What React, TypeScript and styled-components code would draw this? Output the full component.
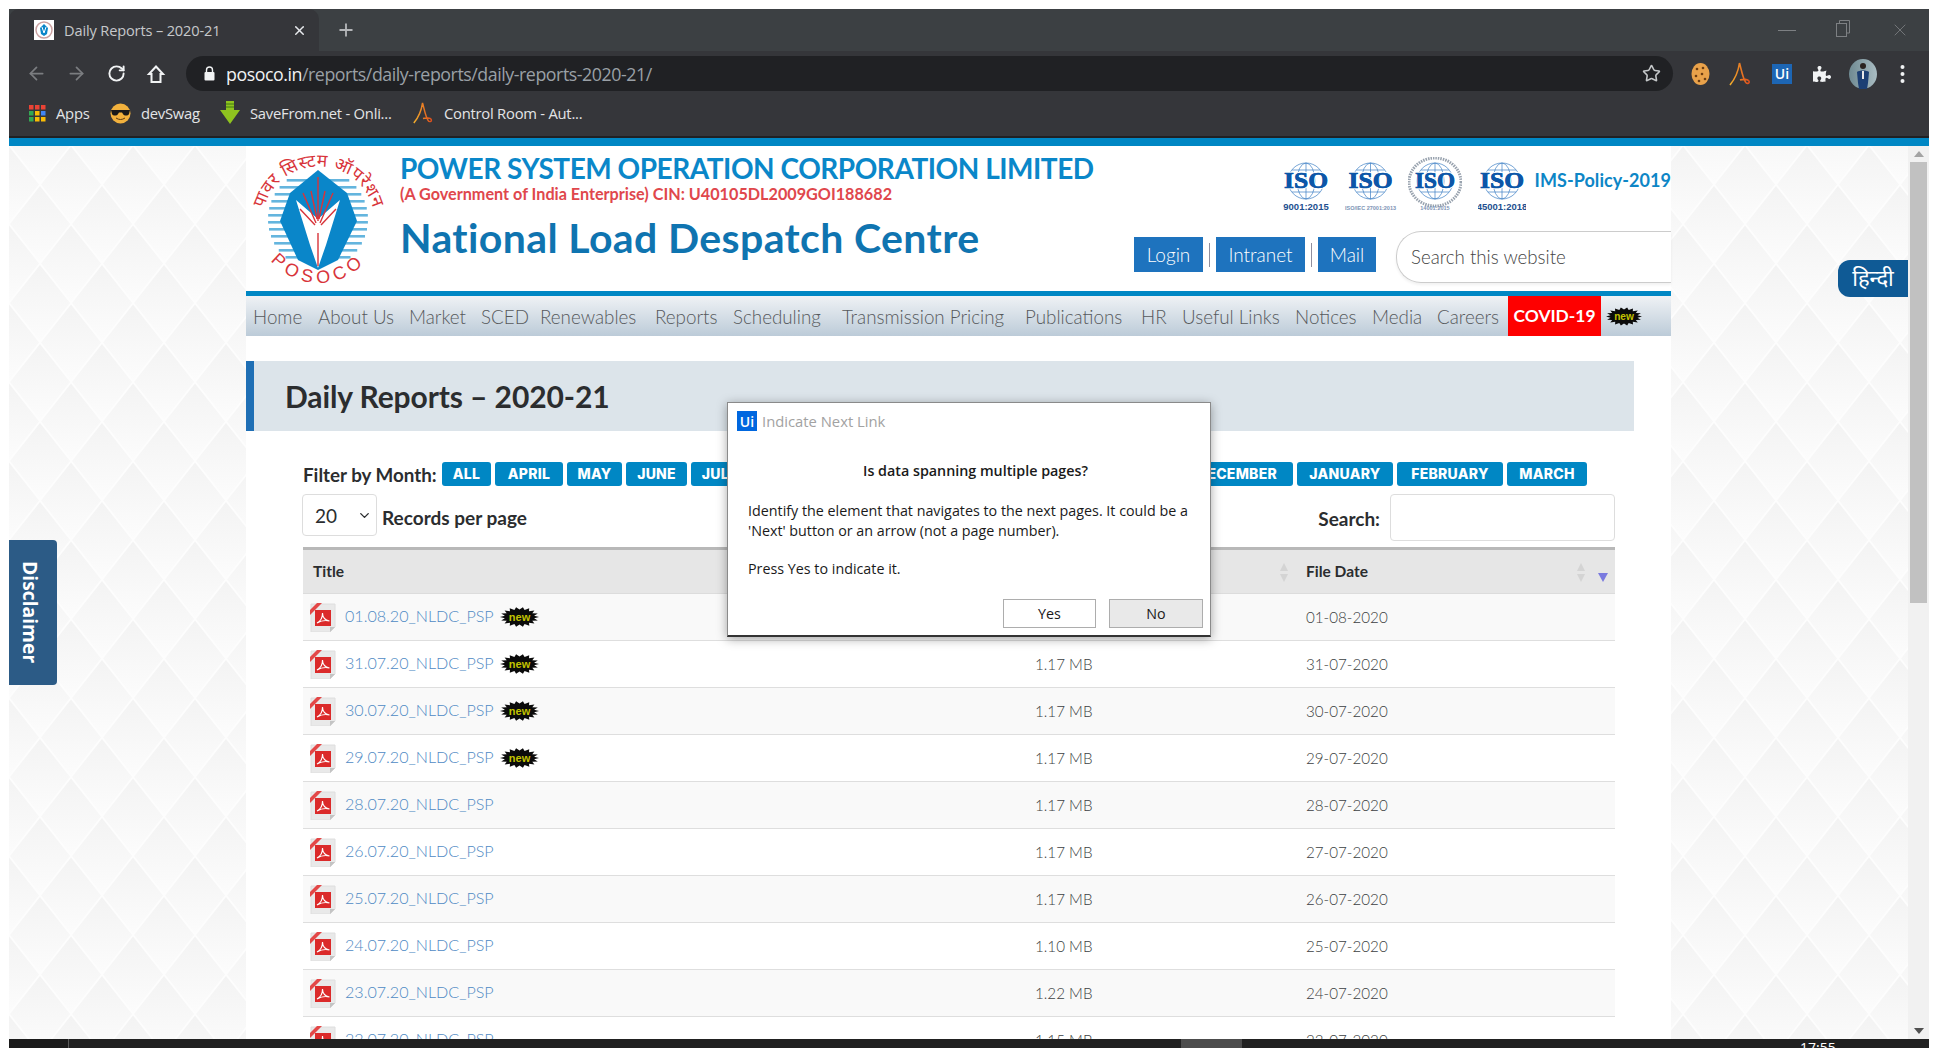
import { ReactNode } from 'react';
import styled, { createGlobalStyle } from 'styled-components';
import { ArrowLeft, ArrowRight, ChevronDown, Plus, RotateCw, Star, X } from 'lucide-react';
import { FaPuzzlePiece } from 'react-icons/fa';

const PAGE_FONT = '"Lato", "Noto Sans", sans-serif';
const UI_FONT = '"Open Sans", "Noto Sans", sans-serif';

const diamondTile = `<svg xmlns="http://www.w3.org/2000/svg" width="62" height="79" viewBox="0 0 62 79"><defs><linearGradient id="g" x1="0" y1="0" x2="0" y2="1"><stop offset="0" stop-color="#f3f3f3"/><stop offset="1" stop-color="#fcfcfc"/></linearGradient></defs><rect width="62" height="79" fill="#fdfdfd"/><g fill="url(#g)"><path d="M31 -38 L61 0 L31 38 L1 0Z"/><path d="M31 41 L61 79 L31 117 L1 79Z"/><path d="M0 1.5 L30 39.5 L0 77.5 L-30 39.5Z"/><path d="M62 1.5 L92 39.5 L62 77.5 L32 39.5Z"/></g></svg>`;

const GlobalStyle = createGlobalStyle`
  html, body {
    margin: 0;
    padding: 0;
    background: #fff;
    overflow: hidden;
  }
  * {
    box-sizing: border-box;
  }
`;

const SWindow = styled.div`
  position: relative;
  display: flex;
  flex-direction: column;
  width: 1938px;
  height: 1048px;
  padding: 9px 9px 0;
  background: #fff;
  overflow: hidden;
`;

/* browser chrome */
const STabStrip = styled.div`
  display: flex;
  align-items: flex-end;
  flex: none;
  height: 42px;
  background: #3c4043;
`;

const STab = styled.div`
  display: flex;
  align-items: center;
  width: 310px;
  height: 42px;
  padding: 0 12px 0 25px;
  border-radius: 10px 10px 0 0;
  background: #35363a;
  color: #c6c8cb;
  font: 400 14.6px ${UI_FONT};
  letter-spacing: -0.15px;
`;

const SFavicon = styled.span`
  display: flex;
  align-items: center;
  justify-content: center;
  width: 20px;
  height: 20px;
  margin-right: 10px;
  background: #fff;
`;

const STabTitle = styled.span`
  flex: 1;
`;

const SNewTab = styled.span`
  display: flex;
  align-self: center;
  margin-left: 17px;
  color: #b4b6b9;
`;

const SWindowControls = styled.div`
  display: flex;
  align-self: center;
  gap: 40px;
  margin-left: auto;
  padding-right: 19px;
  color: #7d8083;
`;

const SMinimize = styled.span`
  align-self: center;
  width: 18px;
  height: 1px;
  background: #7d8083;
`;

const SToolbar = styled.div`
  display: flex;
  align-items: center;
  flex: none;
  height: 45px;
  padding: 0 0 0 16px;
  background: #35363a;
`;

const SNavIcon = styled.span<{ $off?: boolean }>`
  display: flex;
  justify-content: center;
  width: 22px;
  margin-right: 18px;
  color: ${({ $off }) => ($off ? '#7b7d80' : '#f1f3f4')};
`;

const SOmnibox = styled.div`
  display: flex;
  align-items: center;
  width: 1487px;
  height: 35px;
  margin-left: 1px;
  padding: 0 12px 0 18px;
  border-radius: 18px;
  background: #202124;
  font: 400 17.8px ${UI_FONT};
  letter-spacing: -0.45px;
  color: #9aa0a6;
`;

const SUrlHost = styled.span`
  margin-left: 11px;
  color: #f1f3f4;
`;

const SOmniStar = styled.span`
  display: flex;
  margin-left: auto;
  color: #c4c7c9;
`;

const SExtensions = styled.div`
  display: flex;
  align-items: center;
  width: 246px;
  padding-left: 17px;
`;

const SExtSlot = styled.span<{ $w: number }>`
  display: flex;
  justify-content: center;
  flex: none;
  width: ${({ $w }) => $w}px;
  color: #f1f3f4;
`;

const SUiBadge = styled.span<{ $size: number; $fs: number; $bg: string }>`
  display: inline-flex;
  align-items: center;
  justify-content: center;
  flex: none;
  width: ${({ $size }) => $size}px;
  height: ${({ $size }) => $size}px;
  background: ${({ $bg }) => $bg};
  color: #fff;
  font: 600 ${({ $fs }) => $fs}px ${UI_FONT};
`;

const SBookmarks = styled.div`
  display: flex;
  align-items: center;
  flex: none;
  height: 42px;
  padding: 0 0 6px 20px;
  border-bottom: 2px solid #202124;
  background: #35363a;
  color: #e3e4e6;
  font: 400 14.8px ${UI_FONT};
  letter-spacing: -0.25px;
`;

const SBookmark = styled.span<{ $w: number }>`
  display: flex;
  align-items: center;
  gap: 10px;
  width: ${({ $w }) => $w}px;
`;

/* page */
const SViewport = styled.div`
  display: flex;
  flex: 1;
  min-height: 0;
  border-top: 8px solid #0087c4;
  overflow: hidden;
`;

const SPage = styled.div`
  position: relative;
  flex: 1;
  min-width: 0;
  padding-left: 237px;
  background: #fff url("data:image/svg+xml,${encodeURIComponent(diamondTile)}") 0 -1px repeat;
  overflow: hidden;
`;

const SContent = styled.div`
  width: 1425px;
  height: 100%;
  background: #fff;
  font-family: ${PAGE_FONT};
`;

const SHeader = styled.header`
  display: flex;
  height: 150px;
  padding: 7px 0 0 7px;
  border-bottom: 5px solid #0087c4;
`;

const SHeadTitles = styled.div`
  width: 734px;
  margin-left: 15px;
`;

const SCompany = styled.div`
  color: #0a87c9;
  font-size: 28px;
  font-weight: 700;
  letter-spacing: -0.47px;
  line-height: 31px;
  white-space: nowrap;
`;

const SCin = styled.div`
  color: #e0474c;
  font-size: 16.2px;
  font-weight: 700;
  line-height: 19px;
  white-space: nowrap;
`;

const SCentre = styled.div`
  margin-top: 12px;
  color: #0f74b0;
  font-size: 41px;
  font-weight: 700;
  letter-spacing: 0.38px;
  line-height: 46px;
  white-space: nowrap;
`;

const SHeadRight = styled.div`
  display: flex;
  flex-direction: column;
  flex: 1;
  margin-top: 4px;
`;

const SIsoRow = styled.div`
  display: flex;
  align-items: center;
  justify-content: flex-end;
  height: 55px;
`;

const SIsoSlot = styled.span<{ $gap: number }>`
  display: flex;
  margin-right: ${({ $gap }) => $gap}px;
`;

const SIsoPolicy = styled.span`
  margin-bottom: 9px;
  color: #0d86c6;
  font-size: 18px;
  font-weight: 700;
  letter-spacing: 0.05px;
  line-height: 46px;
  white-space: nowrap;
`;

const SActionRow = styled.div`
  display: flex;
  align-items: flex-start;
  margin-top: 19px;
`;

const SActionButton = styled.a<{ $w: number }>`
  display: block;
  width: ${({ $w }) => $w}px;
  height: 35px;
  margin-top: 6px;
  background: #1e73be;
  color: #fff;
  font-size: 19px;
  font-weight: 300;
  line-height: 36px;
  text-align: center;
`;

const SActionSep = styled.span`
  width: 1px;
  height: 24px;
  margin: 12px 6px 0;
  background: #8f8f9f;
`;

const SSiteSearch = styled.div`
  flex: 1;
  height: 52px;
  margin-left: 20px;
  padding-left: 14px;
  border: 1px solid #ccc;
  border-right: 0;
  border-radius: 25px 0 0 25px;
  box-shadow: 0 2px 3px rgba(0, 0, 0, 0.06);
  color: #444;
  font-size: 18.7px;
  font-weight: 300;
  line-height: 50px;
`;

const SNav = styled.nav`
  display: flex;
  align-items: center;
  height: 40px;
  padding-left: 7px;
  background: linear-gradient(#eff2f5, #bccbd8);
  color: #56595c;
  font-size: 18.8px;
  font-weight: 300;
`;

const SNavItem = styled.a<{ $x: number }>`
  flex: none;
  width: ${({ $x }) => $x}px;
  white-space: nowrap;
`;

const SCovid = styled.a`
  align-self: stretch;
  width: 93px;
  background: #fe0000;
  color: #fff;
  font-size: 17.4px;
  font-weight: 700;
  line-height: 40px;
  text-align: center;
`;

const SNavBadge = styled.span`
  display: flex;
  margin-left: 5px;
`;

const STitleBand = styled.div`
  display: flex;
  align-items: center;
  width: 1388px;
  height: 70px;
  margin-top: 25px;
  padding-left: 31px;
  border-left: 8px solid #1f6fb5;
  background: #dce4ea;
  color: #2b2d2f;
  font-size: 30px;
  font-weight: 700;
  letter-spacing: -0.1px;
`;

const SBody = styled.div`
  width: 1312px;
  margin-left: 57px;
  color: #2b2d2f;
`;

const SFilterRow = styled.div`
  display: flex;
  align-items: center;
  gap: 4px;
  height: 24px;
  margin-top: 31px;
  font-size: 18.8px;
  font-weight: 700;
`;

const SFilterLabel = styled.span`
  width: 135px;
  white-space: nowrap;
`;

const SMonthButton = styled.span<{ $w: number }>`
  flex: none;
  width: ${({ $w }) => $w}px;
  height: 24px;
  border-radius: 3px;
  background: #0087c4;
  color: #fff;
  font: 800 14px/24px "Inter", sans-serif;
  letter-spacing: 0.25px;
  text-align: center;
  white-space: nowrap;
`;

const SToolsRow = styled.div`
  display: flex;
  align-items: flex-start;
  margin-top: 8px;
  height: 53px;
`;

const SPageSize = styled.div`
  display: flex;
  align-items: center;
  justify-content: space-between;
  width: 75px;
  height: 42px;
  margin-left: -1px;
  padding: 0 4px 0 12px;
  border: 1px solid #ddd;
  border-radius: 4px;
  font-size: 19px;
`;

const SRecordsLabel = styled.span`
  margin-left: 5px;
  font-size: 19px;
  font-weight: 700;
  line-height: 47px;
`;

const STableSearch = styled.div`
  display: flex;
  margin-left: auto;
  font-size: 19px;
  font-weight: 700;
  line-height: 50px;
`;

const SSearchInput = styled.span`
  width: 225px;
  height: 47px;
  margin-left: 10px;
  border: 1px solid #ddd;
  border-radius: 4px;
`;

const STable = styled.table`
  width: 1312px;
  border-collapse: collapse;
  table-layout: fixed;
  border-top: 3px solid #b8b8b8;
`;

const SHeadCell = styled.th<{ $w: number }>`
  position: relative;
  width: ${({ $w }) => $w}px;
  height: 45px;
  padding: 0 10px 2px;
  background: #e6e6e6;
  font-size: 15.5px;
  font-weight: 700;
  text-align: left;
  border-bottom: 1px solid #dcdcdc;
`;

const SSortMark = styled.span<{ $right: number }>`
  position: absolute;
  top: 13px;
  right: ${({ $right }) => $right}px;
  display: flex;
`;

const SRow = styled.tr<{ $odd: boolean }>`
  height: 47px;
  background: ${({ $odd }) => ($odd ? '#f9f9f9' : '#fff')};
  border-bottom: 1.5px solid #dedede;
`;

const SCell = styled.td`
  padding: 0 10px;
  color: #3c3f42;
  font-size: 15.2px;
  font-weight: 300;
`;

const STitleCell = styled.div`
  display: flex;
  align-items: center;
  margin-left: -3px;
`;

const SFileLink = styled.a`
  margin: 0 5px 3px 9px;
  color: #4f8ac4;
  font-size: 16.1px;
  font-weight: 300;
`;

const SHindi = styled.a`
  position: absolute;
  top: 114px;
  right: 0;
  width: 70px;
  height: 37px;
  border-radius: 12px 0 0 12px;
  background: #0f5a95;
  color: #fff;
  font: 400 22px/34px "Noto Sans", "Noto Sans Devanagari", sans-serif;
  text-align: center;
`;

const SDisclaimer = styled.a`
  position: absolute;
  top: 394px;
  left: 0;
  width: 48px;
  height: 145px;
  padding: 21px 6px 0 0;
  border-radius: 0 4px 4px 0;
  background: #2c5b86;
  color: #fff;
  font: 700 19.3px/42px ${UI_FONT};
  writing-mode: vertical-rl;
`;

const SScrollbar = styled.div`
  display: flex;
  flex-direction: column;
  align-items: center;
  flex: none;
  width: 21px;
  padding-top: 5px;
  background: #f1f1f1;
`;

const SScrollThumb = styled.div`
  width: 17px;
  height: 441px;
  margin-top: 5px;
  background: #c1c1c1;
`;

const SScrollArrow = styled.span<{ $up?: boolean }>`
  width: 0;
  height: 0;
  border-left: 5px solid transparent;
  border-right: 5px solid transparent;
  ${({ $up }) => ($up ? 'border-bottom: 6px solid #a3a3a3;' : 'border-top: 6px solid #505050; margin-top: auto; margin-bottom: 5px;')}
`;

const STaskbar = styled.div`
  display: flex;
  flex: none;
  height: 9px;
  background: #212121;
  overflow: hidden;
`;

const STaskStart = styled.span`
  width: 60px;
  border-right: 1px solid #5a5a5a;
  background: #1b1b1b;
`;

const STaskTile = styled.span`
  width: 61px;
  margin-left: 1112px;
  background: #4c4c4c;
`;

const STaskClock = styled.span`
  margin: 0 0 0 558px;
  color: #fff;
  font: 400 14px/18px ${UI_FONT};
`;

/* dialog */
const SDialog = styled.div`
  position: absolute;
  top: 402px;
  left: 727px;
  display: flex;
  flex-direction: column;
  width: 484px;
  height: 235px;
  border: 1px solid #8a8a8a;
  border-bottom: 2px solid #333;
  background: #fff;
  box-shadow: 0 2px 10px rgba(0, 0, 0, 0.35);
  color: #1a1a1a;
  font: 400 14.3px ${UI_FONT};
`;

const SDialogBar = styled.div`
  display: flex;
  align-items: center;
  gap: 5px;
  height: 20px;
  margin: 8px 0 0 9px;
  color: #a2a2a2;
  font-size: 14.8px;
`;

const SDialogHeading = styled.div`
  margin-top: 30px;
  padding-left: 13px;
  font-weight: 600;
  line-height: 20px;
  text-align: center;
`;

const SDialogText = styled.p<{ $gap: number }>`
  margin: ${({ $gap }) => $gap}px 0 0 20px;
  line-height: 20px;
  white-space: nowrap;
`;

const SDialogActions = styled.div`
  display: flex;
  justify-content: flex-end;
  gap: 13px;
  margin-top: auto;
  padding: 0 7px 7px 0;
`;

const SDialogButton = styled.span<{ $muted?: boolean }>`
  width: ${({ $muted }) => ($muted ? 94 : 93)}px;
  height: 29px;
  border: 1px solid #adadad;
  background: ${({ $muted }) => ($muted ? '#e9e9e9' : '#fff')};
  line-height: 27px;
  text-align: center;
`;

const burst = (w: number, h: number, n: number) => {
  const pts: string[] = [];
  for (let i = 0; i < n * 2; i += 1) {
    const a = (Math.PI * i) / n;
    const k = i % 2 === 0 ? 1 : 0.76;
    pts.push(`${(w / 2 + (Math.cos(a) * k * w) / 2).toFixed(1)},${(h / 2 + (Math.sin(a) * k * h) / 2).toFixed(1)}`);
  }
  return pts.join(' ');
};

const NewBadge = ({ w = 41, h = 20 }: { w?: number; h?: number }) => (
  <svg width={w} height={h} viewBox="0 0 39 20">
    <polygon points={burst(39, 20, 18)} fill="#0b0b0b" />
    <text x="19.5" y="14" textAnchor="middle" fontFamily="Liberation Sans" fontSize="11" fontWeight="700" fill="#c2c200">new</text>
  </svg>
);

const PdfIcon = () => (
  <svg width="26" height="29" viewBox="0 0 26 29">
    <path d="M1 1h24v23l-5 5H1z" fill="#e9e9e9" stroke="#dedede" />
    <path d="M25 24l-5 0v5z" fill="#c4c4c4" />
    <rect x="5" y="7" width="16" height="16" fill="#db2a2a" />
    <path d="M7 20c4-2 5.5-6 5.5-10 0 4 2.5 7 7 8-4-1-9 0-12.5 2z" fill="none" stroke="#fff" strokeWidth="1.1" />
    <path d="M0 7L7 0h5L0 12z" fill="#e34747" />
  </svg>
);

const SortMark = () => (
  <svg width="10" height="19" viewBox="0 0 10 19">
    <path d="M5 0l4 8H1z" fill="#d4d4d4" />
    <path d="M5 19l4-8H1z" fill="#d4d4d4" />
  </svg>
);

const IsoLogo = ({ w, cap, ring, faint }: { w: number; cap: string; ring?: boolean; faint?: boolean }) => {
  const cx = w / 2;
  return (
    <svg width={w} height="55" viewBox={`0 0 ${w} 55`}>
      {ring && <ellipse cx={cx} cy="25" rx={w / 2 - 1} ry="24" fill="none" stroke="#98a2ae" strokeWidth="3" strokeDasharray="1.5 1" />}
      <g fill="none" stroke="#3d7fc4" strokeWidth="0.7">
        <circle cx={cx} cy="24" r="18" />
        <ellipse cx={cx} cy="24" rx="9" ry="18" />
        <path d={`M${cx} 6v36M${cx - 14} 13h28M${cx - 14} 35h28`} />
      </g>
      <text x={cx} y="31" textAnchor="middle" fontFamily="Liberation Serif" fontSize="24" fontWeight="700" fill="#0c56a8" stroke="#fff" strokeWidth="2.5" paintOrder="stroke" textLength={ring ? 40 : 44} lengthAdjust="spacingAndGlyphs">ISO</text>
      <text x={cx} y="31" textAnchor="middle" fontFamily="Liberation Serif" fontSize="24" fontWeight="700" fill="#0c56a8" stroke="#0c56a8" strokeWidth="0.7" textLength={ring ? 40 : 44} lengthAdjust="spacingAndGlyphs">ISO</text>
      <text x={cx} y="53" textAnchor="middle" fontFamily="Liberation Sans" fontSize={faint ? 5.5 : 9.5} fontWeight="700" fill={faint ? '#7d93b5' : '#23508f'}>{cap}</text>
    </svg>
  );
};

const Logo = () => (
  <svg width="132" height="135" viewBox="0 0 132 135">
    <defs>
      <path id="hindiArc" d="M9 70 A56.5 56.5 0 0 1 122 70" />
      <path id="posocoArc" d="M3.5 68 A62 62 0 0 0 127.5 68" />
    </defs>
    <text fontFamily="Noto Sans, Noto Sans Devanagari, sans-serif" fontSize="17.5" fill="#d8343a" letterSpacing="0.6">
      <textPath href="#hindiArc" startOffset="50%" textAnchor="middle">पावर सिस्टम ऑपरेशन</textPath>
    </text>
    {[26, 33, 40, 47, 54, 61, 68, 75, 82, 89, 96, 103].map((y) => {
      const half = Math.sqrt(Math.max(0, 2500 - (y - 65) ** 2));
      return <rect key={y} x={65 - half} y={y} width={2 * half} height="2.6" fill="#64b5de" />;
    })}
    <path d="M65 17L37 40 27 68 45 107 65 117 85 107 104 68 94 40z" fill="#0a86c9" />
    <path d="M43 47L65 66 87 47 73 92 65 115 57 92z" fill="#fff" />
    <g stroke="#d8343a" strokeWidth="1.4" fill="none">
      <path d="M65 24V68M65 80V113M50 40L63 70M80 40L67 70M58 38L64 66M72 38L66 66M47 56L62 72M83 56L68 72" />
    </g>
    <text fontFamily="Liberation Sans" fontSize="18" fill="#d8343a" letterSpacing="5">
      <textPath href="#posocoArc" startOffset="50%" textAnchor="middle">POSOCO</textPath>
    </text>
  </svg>
);

const Favicon = () => (
  <svg width="18" height="18" viewBox="0 0 18 18">
    <circle cx="9" cy="9" r="8" fill="none" stroke="#c9a0a0" strokeWidth="1.5" />
    <path d="M9 3L5 7l1 6 3 2 3-2 1-6z" fill="#0a86c9" />
    <path d="M7 6l2 6 2-6" stroke="#fff" fill="none" />
  </svg>
);

const HomeOutline = () => (
  <svg width="20" height="20" viewBox="0 0 20 20" fill="none" stroke="#f1f3f4" strokeWidth="2" strokeLinejoin="miter">
    <path d="M10 2.5L17 10h-2.5v8h-9v-8H3z" />
  </svg>
);

const AIcon = ({ id, size }: { id: string; size: number }) => (
  <svg width={size} height={size} viewBox="0 0 22 24" fill="none">
    <defs>
      <linearGradient id={id} x1="0" x2="1" y1="0" y2="0">
        <stop offset="0" stopColor="#f4b02c" />
        <stop offset="1" stopColor="#dd4f1d" />
      </linearGradient>
    </defs>
    <path d="M1 23C6 17 9.5 8 10.5 1c2 7 3 14 6 19 1 2 4.5 2 3.5-1-1-2-6-2-9-1" stroke={`url(#${id})`} strokeWidth="1.6" />
  </svg>
);

const AppsIcon = () => {
  const colors = ['#ea4335', '#ea4335', '#ea4335', '#34a853', '#fbbc04', '#4285f4', '#34a853', '#fbbc04', '#fbbc04'];
  return (
    <svg width="17" height="17" viewBox="0 0 17 17">
      {colors.map((c, i) => (
        <rect key={i} x={(i % 3) * 6} y={Math.floor(i / 3) * 6} width="4.5" height="4.5" fill={c} />
      ))}
    </svg>
  );
};

const Cool = () => (
  <svg width="21" height="21" viewBox="0 0 21 21">
    <circle cx="10.5" cy="10.5" r="10" fill="#f2b13d" />
    <path d="M1 7h19l-1 4c-1 2-5 2-6 0l-1-1.5h-3L8 11c-1 2-5 2-6 0z" fill="#1a1a1a" />
    <path d="M6 15c3 2 6 2 9 0" stroke="#5b3a10" fill="none" />
  </svg>
);

const SaveFrom = () => (
  <svg width="20" height="24" viewBox="0 0 20 24">
    <path d="M6 0h8v9h6L10 23 0 9h6z" fill="#8fc31f" />
    <path d="M6 3h8M6 6h8" stroke="#3e7a12" />
  </svg>
);

const Cookie = () => (
  <svg width="19" height="24" viewBox="0 0 19 24">
    <ellipse cx="9.5" cy="12" rx="9" ry="11" fill="#e9a24a" />
    {[[6, 7], [12, 6], [5, 14], [11, 12], [14, 17], [8, 19]].map(([x, y]) => (
      <circle key={`${x}-${y}`} cx={x} cy={y} r="1.3" fill="#6b3d12" />
    ))}
  </svg>
);

const Avatar = () => (
  <svg width="28" height="30" viewBox="0 0 28 30">
    <defs>
      <linearGradient id="av" x1="0" x2="1" y1="0" y2="0">
        <stop offset="0" stopColor="#6f8a92" />
        <stop offset="1" stopColor="#a9bcc2" />
      </linearGradient>
    </defs>
    <ellipse cx="14" cy="15" rx="14" ry="15" fill="url(#av)" />
    <circle cx="14" cy="7" r="3" fill="#2b2320" />
    <path d="M8 13c2-2 10-2 12 0l-1 11-1 6h-8l-1-6z" fill="#1c3f74" />
    <path d="M13 12h2v8h-2z" fill="#e8e8e8" />
  </svg>
);

const Lock = () => (
  <svg width="11" height="15" viewBox="0 0 11 15">
    <path d="M2.5 6V4a3 3 0 0 1 6 0v2" fill="none" stroke="#f1f3f4" strokeWidth="1.4" />
    <rect x="0.5" y="6" width="10" height="8.5" rx="1" fill="#f1f3f4" />
  </svg>
);

const Restore = () => (
  <svg width="14" height="18" viewBox="0 0 14 18" fill="none" stroke="#7d8083">
    <rect x="0.5" y="3.5" width="10" height="13" />
    <path d="M3.5 3V0.5h10V13H11" />
  </svg>
);

const MoreDots = () => (
  <svg width="5" height="20" viewBox="0 0 5 20" fill="#f1f3f4">
    <circle cx="2.5" cy="3" r="2" />
    <circle cx="2.5" cy="10" r="2" />
    <circle cx="2.5" cy="17" r="2" />
  </svg>
);

const NAV_ITEMS: [string, number][] = [
  ['Home', 65],
  ['About Us', 91],
  ['Market', 72],
  ['SCED', 59],
  ['Renewables', 115],
  ['Reports', 78],
  ['Scheduling', 109],
  ['Transmission Pricing', 183],
  ['Publications', 116],
  ['HR', 41],
  ['Useful Links', 113],
  ['Notices', 77],
  ['Media', 65],
  ['Careers', 71],
];

const MONTHS: [string, number][] = [
  ['ALL', 49],
  ['APRIL', 68],
  ['MAY', 55],
  ['JUNE', 61],
  ['JULY', 58],
  ['AUGUST', 86],
  ['SEPTEMBER', 122],
  ['OCTOBER', 94],
  ['NOVEMBER', 110],
  ['DECEMBER', 112],
  ['JANUARY', 96],
  ['FEBRUARY', 106],
  ['MARCH', 80],
];

const ROWS = [
  { name: '01.08.20_NLDC_PSP', size: '1.17 MB', date: '01-08-2020', fresh: true },
  { name: '31.07.20_NLDC_PSP', size: '1.17 MB', date: '31-07-2020', fresh: true },
  { name: '30.07.20_NLDC_PSP', size: '1.17 MB', date: '30-07-2020', fresh: true },
  { name: '29.07.20_NLDC_PSP', size: '1.17 MB', date: '29-07-2020', fresh: true },
  { name: '28.07.20_NLDC_PSP', size: '1.17 MB', date: '28-07-2020' },
  { name: '26.07.20_NLDC_PSP', size: '1.17 MB', date: '27-07-2020' },
  { name: '25.07.20_NLDC_PSP', size: '1.17 MB', date: '26-07-2020' },
  { name: '24.07.20_NLDC_PSP', size: '1.10 MB', date: '25-07-2020' },
  { name: '23.07.20_NLDC_PSP', size: '1.22 MB', date: '24-07-2020' },
  { name: '22.07.20_NLDC_PSP', size: '1.15 MB', date: '23-07-2020' },
];

const Bookmark = ({ w, icon, label }: { w: number; icon: ReactNode; label: string }) => (
  <SBookmark $w={w}>
    {icon}
    <span>{label}</span>
  </SBookmark>
);

const App = () => {
  return (
    <SWindow>
      <GlobalStyle />
      <STabStrip>
        <STab>
          <SFavicon><Favicon /></SFavicon>
          <STabTitle>Daily Reports – 2020-21</STabTitle>
          <X size={15} color="#e8eaed" strokeWidth={2.4} />
        </STab>
        <SNewTab><Plus size={20} strokeWidth={2.2} /></SNewTab>
        <SWindowControls>
          <SMinimize />
          <Restore />
          <X size={20} strokeWidth={1} />
        </SWindowControls>
      </STabStrip>
      <SToolbar>
        <SNavIcon $off><ArrowLeft size={21} /></SNavIcon>
        <SNavIcon $off><ArrowRight size={21} /></SNavIcon>
        <SNavIcon><RotateCw size={19} strokeWidth={2.4} /></SNavIcon>
        <SNavIcon><HomeOutline /></SNavIcon>
        <SOmnibox>
          <Lock />
          <SUrlHost>posoco.in</SUrlHost>
          <span>/reports/daily-reports/daily-reports-2020-21/</span>
          <SOmniStar><Star size={19} /></SOmniStar>
        </SOmnibox>
        <SExtensions>
          <SExtSlot $w={20}><Cookie /></SExtSlot>
          <SExtSlot $w={60}><AIcon id="aExt" size={24} /></SExtSlot>
          <SExtSlot $w={24}><SUiBadge $size={20} $fs={14} $bg="#1d66b4">Ui</SUiBadge></SExtSlot>
          <SExtSlot $w={55}><FaPuzzlePiece size={18} /></SExtSlot>
          <SExtSlot $w={28}><Avatar /></SExtSlot>
          <SExtSlot $w={50}><MoreDots /></SExtSlot>
        </SExtensions>
      </SToolbar>
      <SBookmarks>
        <Bookmark w={81} icon={<AppsIcon />} label="Apps" />
        <Bookmark w={110} icon={<Cool />} label="devSwag" />
        <Bookmark w={192} icon={<SaveFrom />} label="SaveFrom.net - Onli..." />
        <Bookmark w={200} icon={<AIcon id="aBookmark" size={22} />} label="Control Room - Aut..." />
      </SBookmarks>
      <SViewport>
        <SPage>
          <SContent>
            <SHeader>
              <Logo />
              <SHeadTitles>
                <SCompany>POWER SYSTEM OPERATION CORPORATION LIMITED</SCompany>
                <SCin>(A Government of India Enterprise) CIN: U40105DL2009GOI188682</SCin>
                <SCentre>National Load Despatch Centre</SCentre>
              </SHeadTitles>
              <SHeadRight>
                <SIsoRow>
                  <SIsoSlot $gap={15}><IsoLogo w={46} cap="9001:2015" /></SIsoSlot>
                  <SIsoSlot $gap={11}><IsoLogo w={53} cap="ISO/IEC 27001:2013" faint /></SIsoSlot>
                  <SIsoSlot $gap={16}><IsoLogo w={54} cap="14001:2015" ring faint /></SIsoSlot>
                  <SIsoSlot $gap={9}><IsoLogo w={48} cap="45001:2018" /></SIsoSlot>
                  <SIsoPolicy>IMS-Policy-2019</SIsoPolicy>
                </SIsoRow>
                <SActionRow>
                  <SActionButton $w={69}>Login</SActionButton>
                  <SActionSep />
                  <SActionButton $w={89}>Intranet</SActionButton>
                  <SActionSep />
                  <SActionButton $w={58}>Mail</SActionButton>
                  <SSiteSearch>Search this website</SSiteSearch>
                </SActionRow>
              </SHeadRight>
            </SHeader>
            <SNav>
              {NAV_ITEMS.map(([label, w]) => (
                <SNavItem key={label} $x={w}>{label}</SNavItem>
              ))}
              <SCovid>COVID-19</SCovid>
              <SNavBadge><NewBadge w={36} h={19} /></SNavBadge>
            </SNav>
            <STitleBand>Daily Reports – 2020-21</STitleBand>
            <SBody>
              <SFilterRow>
                <SFilterLabel>Filter by Month:</SFilterLabel>
                {MONTHS.map(([m, w]) => (
                  <SMonthButton key={m} $w={w}>{m}</SMonthButton>
                ))}
              </SFilterRow>
              <SToolsRow>
                <SPageSize>
                  <span>20</span>
                  <ChevronDown size={15} strokeWidth={2.2} />
                </SPageSize>
                <SRecordsLabel>Records per page</SRecordsLabel>
                <STableSearch>
                  <span>Search:</span>
                  <SSearchInput />
                </STableSearch>
              </SToolsRow>
              <STable>
                <thead>
                  <tr>
                    <SHeadCell $w={722}>Title</SHeadCell>
                    <SHeadCell $w={271}>
                      File Size
                      <SSortMark $right={7}><SortMark /></SSortMark>
                    </SHeadCell>
                    <SHeadCell $w={319}>
                      File Date
                      <SSortMark $right={29}><SortMark /></SSortMark>
                      <SSortMark $right={7}>
                        <svg width="10" height="19" viewBox="0 0 10 19"><path d="M0 10h10l-5 9z" fill="#7a7adf" /></svg>
                      </SSortMark>
                    </SHeadCell>
                  </tr>
                </thead>
                <tbody>
                  {ROWS.map((row, i) => (
                    <SRow key={row.name} $odd={i % 2 === 0}>
                      <SCell>
                        <STitleCell>
                          <PdfIcon />
                          <SFileLink>{row.name}</SFileLink>
                          {row.fresh && <NewBadge />}
                        </STitleCell>
                      </SCell>
                      <SCell>{row.size}</SCell>
                      <SCell>{row.date}</SCell>
                    </SRow>
                  ))}
                </tbody>
              </STable>
            </SBody>
          </SContent>
          <SHindi>हिन्दी</SHindi>
          <SDisclaimer>Disclaimer</SDisclaimer>
        </SPage>
        <SScrollbar>
          <SScrollArrow $up />
          <SScrollThumb />
          <SScrollArrow />
        </SScrollbar>
      </SViewport>
      <STaskbar>
        <STaskStart />
        <STaskTile />
        <STaskClock>17:55</STaskClock>
      </STaskbar>
      <SDialog>
        <SDialogBar>
          <SUiBadge $size={20} $fs={14} $bg="#0067df">Ui</SUiBadge>
          <span>Indicate Next Link</span>
        </SDialogBar>
        <SDialogHeading>Is data spanning multiple pages?</SDialogHeading>
        <SDialogText $gap={20}>
          Identify the element that navigates to the next pages. It could be a
          <br />
          'Next' button or an arrow (not a page number).
        </SDialogText>
        <SDialogText $gap={18}>Press Yes to indicate it.</SDialogText>
        <SDialogActions>
          <SDialogButton>Yes</SDialogButton>
          <SDialogButton $muted>No</SDialogButton>
        </SDialogActions>
      </SDialog>
    </SWindow>
  );
};

export default App;
